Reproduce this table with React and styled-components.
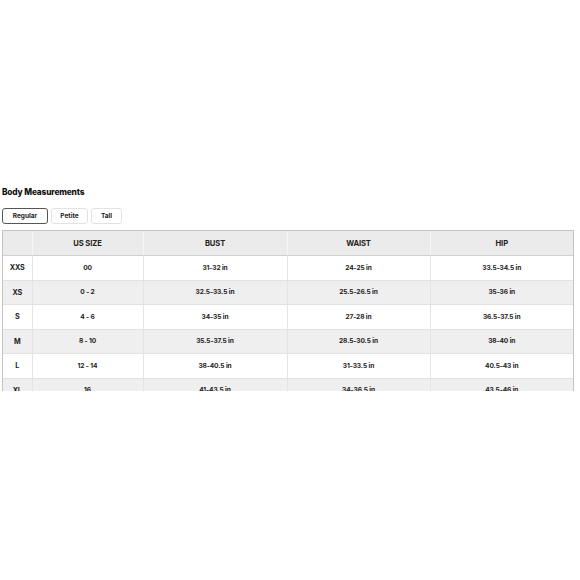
import React from "react";
import styled, { createGlobalStyle } from "styled-components";

const Global = createGlobalStyle`
  html, body { margin: 0; padding: 0; background: #fff; }
  body { font-family: "Inter", "Lato", "Liberation Sans", sans-serif; color: #1a1a1a; }
`;

const Page = styled.div`
  width: 580px;
  height: 580px;
  padding: 187px 0 0 2px;
  box-sizing: border-box;
  display: flex;
  flex-direction: column;
`;

const Title = styled.h2`
  margin: 0;
  font-size: 8.3px;
  line-height: 11px;
  font-weight: 800;
  letter-spacing: -0.15px;
  color: #111;
`;

const Tabs = styled.div`
  display: flex;
  gap: 3px;
  margin-top: 10px;
`;

const Tab = styled.button`
  height: 16px;
  padding: 0;
  width: ${(p) => p.$w}px;
  box-sizing: border-box;
  border-radius: 3px;
  border: 1px solid ${(p) => (p.$active ? "#555" : "#e2e2e2")};
  background: #fff;
  font-family: inherit;
  font-size: 6.5px;
  font-weight: 700;
  color: #222;
  display: flex;
  align-items: center;
  justify-content: center;
`;

const TableWrap = styled.div`
  margin-top: 6px;
  width: 572px;
  height: 161px;
  overflow: hidden;
  box-sizing: border-box;
  border: 1px solid #c4c4c4;
  border-bottom: none;
`;

const Table = styled.table`
  width: 100%;
  border-collapse: collapse;
  table-layout: fixed;
`;

const Th = styled.th`
  height: 24px;
  padding: 0;
  background: #ebebeb;
  border-bottom: 1px solid #d0d0d0;
  border-left: 1px solid #f6f6f6;
  font-size: 7.6px;
  font-weight: 700;
  color: #222;
  text-align: center;
  letter-spacing: -0.1px;
  &:first-child { border-left: none; }
`;

const Tr = styled.tr`
  background: ${(p) => (p.$alt ? "#efefef" : "#fff")};
`;

const Td = styled.td`
  height: 23.5px;
  padding: 0;
  border-bottom: 1px solid #e2e2e2;
  border-left: 1px solid #e4e4e4;
  font-size: 6.6px;
  font-weight: 700;
  color: #222;
  text-align: center;
  letter-spacing: -0.1px;
  &:first-child { border-left: none; font-size: 7.2px; }
`;

const cols = [29, 111, 144, 143, 143];

const rows = [
  ["XXS", "00", "31-32 in", "24-25 in", "33.5-34.5 in"],
  ["XS", "0 - 2", "32.5-33.5 in", "25.5-26.5 in", "35-36 in"],
  ["S", "4 - 6", "34-35 in", "27-28 in", "36.5-37.5 in"],
  ["M", "8 - 10", "35.5-37.5 in", "28.5-30.5 in", "38-40 in"],
  ["L", "12 - 14", "38-40.5 in", "31-33.5 in", "40.5-43 in"],
  ["XL", "16", "41-43.5 in", "34-36.5 in", "43.5-46 in"],
  ["XXL", "18", "44-46.5 in", "37-39.5 in", "46.5-49 in"],
];

export default function App() {
  return (
    <>
      <Global />
      <Page>
        <Title>Body Measurements</Title>
        <Tabs>
          <Tab $active $w={46}>Regular</Tab>
          <Tab $w={37}>Petite</Tab>
          <Tab $w={31}>Tall</Tab>
        </Tabs>
        <TableWrap>
          <Table>
            <colgroup>
              {cols.map((w, i) => (
                <col key={i} style={{ width: w }} />
              ))}
            </colgroup>
            <thead>
              <tr>
                <Th></Th>
                <Th>US SIZE</Th>
                <Th>BUST</Th>
                <Th>WAIST</Th>
                <Th>HIP</Th>
              </tr>
            </thead>
            <tbody>
              {rows.map((r, i) => (
                <Tr key={r[0]} $alt={i % 2 === 1}>
                  {r.map((c, j) => (
                    <Td key={j}>{c}</Td>
                  ))}
                </Tr>
              ))}
            </tbody>
          </Table>
        </TableWrap>
      </Page>
    </>
  );
}
